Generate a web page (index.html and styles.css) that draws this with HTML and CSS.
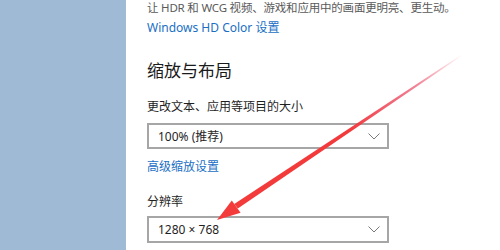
FILE: index.html
```html
<!DOCTYPE html>
<html lang="zh-CN">
<head>
<meta charset="utf-8">
<link rel="stylesheet" href="styles.css">
</head>
<body>
<div class="page">
  <aside class="side"></aside>
  <main class="content">
    <p class="desc">让 HDR 和 WCG 视频、游戏和应用中的画面更明亮、更生动。</p>
    <a class="link link-hd">Windows HD Color 设置</a>
    <h2 class="heading">缩放与布局</h2>
    <div class="label label-scale">更改文本、应用等项目的大小</div>
    <div class="select select-scale">
      <span class="select-text">100% (推荐)</span>
      <svg class="chev" width="12" height="7" viewBox="0 0 12 7"><path d="M0.5 0.5 L6 6 L11.5 0.5" fill="none" stroke="#7a7a7a" stroke-width="1"/></svg>
    </div>
    <a class="link link-adv">高级缩放设置</a>
    <div class="label label-res">分辨率</div>
    <div class="select select-res">
      <span class="select-text">1280 × 768</span>
      <svg class="chev" width="12" height="7" viewBox="0 0 12 7"><path d="M0.5 0.5 L6 6 L11.5 0.5" fill="none" stroke="#7a7a7a" stroke-width="1"/></svg>
    </div>
  </main>
  <svg class="arrow" width="500" height="250" viewBox="0 0 500 250">
    <defs>
      <linearGradient id="fade" gradientUnits="userSpaceOnUse" x1="462" y1="55" x2="236" y2="207">
        <stop offset="0" stop-color="#f0304a" stop-opacity="0"/>
        <stop offset="0.2" stop-color="#e83050" stop-opacity="0.6"/>
        <stop offset="0.5" stop-color="#f23a3c" stop-opacity="1"/>
        <stop offset="1" stop-color="#f33b3b" stop-opacity="1"/>
      </linearGradient>
    </defs>
    <polygon points="462.3,55.4 461.7,54.6 234.2,204.0 237.8,208.4" fill="url(#fade)"/>
    <polygon points="217,220 240.6,212.8 231.8,200.4" fill="#f33b3b"/>
  </svg>
</div>
</body>
</html>
```
FILE: styles.css
```css
html, body {
  margin: 0;
  padding: 0;
  background: #ffffff;
}
.page {
  position: relative;
  width: 500px;
  height: 250px;
  overflow: hidden;
  display: flex;
  font-family: "Noto Sans", "Noto Sans CJK SC", sans-serif;
  font-size: 12px;
  color: #1f1f1f;
}
.side {
  width: 126px;
  flex: none;
  background: #9fbad4;
}
.content {
  flex: 1;
  padding-left: 21px;
  display: flex;
  flex-direction: column;
  align-items: flex-start;
}
.desc {
  margin: 0;
  line-height: 16px;
  font-size: 11.5px;
  letter-spacing: -0.2px;
  color: #5a5a5a;
  white-space: nowrap;
}
.link {
  color: #1a6fc4;
  line-height: 20px;
  font-size: 12px;
}
.link-hd {
  margin-top: 2px;
}
.heading {
  margin: 21px 0 0;
  font-size: 17px;
  font-weight: normal;
  line-height: 24px;
  color: #1a1a1a;
}
.label {
  line-height: 16px;
  color: #1f1f1f;
}
.label-scale {
  margin-top: 16px;
}
.select {
  box-sizing: border-box;
  width: 242px;
  height: 26px;
  border: 2px solid #a6a6a6;
  display: flex;
  align-items: center;
  justify-content: space-between;
  padding: 0 7px 0 9px;
  background: #fff;
}
.select-text {
  color: #1f1f1f;
}
.select-scale {
  margin-top: 8px;
}
.link-adv {
  margin-top: 8px;
}
.label-res {
  margin-top: 17px;
}
.select-res {
  margin-top: 6px;
  height: 27px;
}
.chev {
  display: block;
}
.arrow {
  position: absolute;
  left: 0;
  top: 0;
}
```
